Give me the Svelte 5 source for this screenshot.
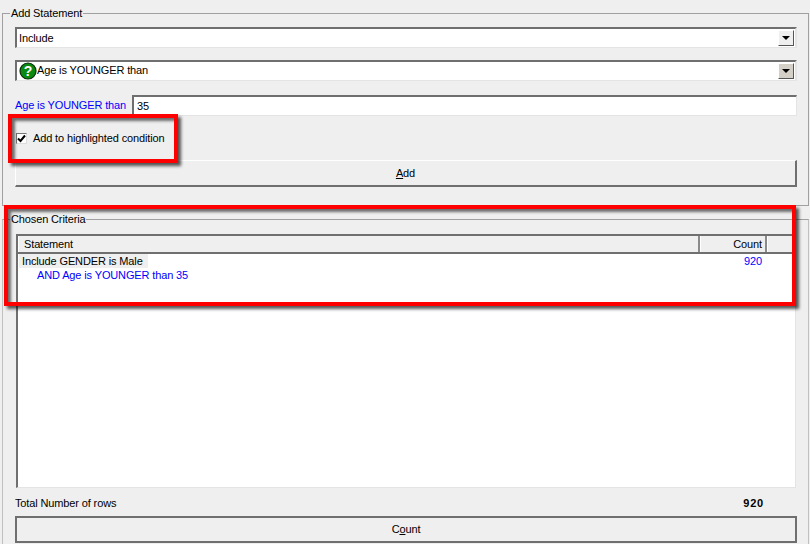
<script>
	const rows = [
		{ text: 'Include GENDER is Male', count: '920', sub: false },
		{ text: 'AND Age is YOUNGER than 35', count: '', sub: true }
	];
</script>

<div class="page">
	<fieldset class="group first">
		<legend>Add Statement</legend>

		<div class="combo">
			<span class="value">Include</span>
			<span class="arrow light"><i></i></span>
		</div>

		<div class="combo second">
			<svg class="help" width="18" height="18" viewBox="0 0 18 18">
				<circle cx="9" cy="9" r="8" fill="#0b8a12" stroke="#0a2e0a" stroke-width="1.2" />
				<text x="9" y="14" text-anchor="middle" fill="#fff" font-size="14" font-weight="700" font-family="Liberation Sans, sans-serif">?</text>
			</svg>
			<span class="value raised">Age is YOUNGER than</span>
			<span class="arrow"><i></i></span>
		</div>

		<div class="field">
			<label for="age">Age is YOUNGER than</label>
			<input id="age" value="35" />
		</div>

		<div class="check">
			<span class="box">
				<svg width="9" height="9" viewBox="0 0 9 9">
					<path d="M1 4.5 L3.5 7 L8 1.5" fill="none" stroke="#000" stroke-width="2" />
				</svg>
			</span>
			Add to highlighted condition
		</div>

		<button class="btn add"><u>A</u>dd</button>
	</fieldset>

	<fieldset class="group criteria">
		<legend>Chosen Criteria</legend>

		<div class="list">
			<div class="head">
				<div class="col statement">Statement</div>
				<div class="col count">Count</div>
				<div class="col rest"></div>
			</div>
			{#each rows as row}
				<div class="row">
					<span class="cell" class:sub={row.sub} class:picked={!row.sub}>{row.text}</span>
					<span class="num">{row.count}</span>
				</div>
			{/each}
		</div>

		<div class="total">
			<span>Total Number of rows</span>
			<b>920</b>
		</div>

		<button class="btn run">C<u>o</u>unt</button>
	</fieldset>

	<div class="mark mark-check"></div>
	<div class="mark mark-list"></div>
</div>

<style>
	:global(body) {
		margin: 0;
		background: #efefef;
	}
	.page {
		position: relative;
		width: 810px;
		height: 544px;
		overflow: hidden;
		background: #efefef;
		color: #000;
		font: 11px/13px Tahoma, 'Liberation Sans', sans-serif;
		letter-spacing: -0.13px;
		box-sizing: border-box;
		padding: 7px 0 0 2px;
	}
	.group {
		box-sizing: border-box;
		width: 807px;
		margin: 0;
		padding: 0 11px 0 12px;
		border: 1px solid #a0a0a0;
		min-inline-size: 0;
	}
	.group legend {
		padding: 0 1px;
		margin-left: -5px;
		line-height: 13px;
	}
	.first {
		height: 199px;
		padding-top: 7px;
	}
	.criteria {
		margin-top: 7px;
		height: 340px;
		padding-top: 8px;
		border-color: #c0c0c0;
		border-top-color: #a0a0a0;
		border-bottom: 0;
	}
	.combo {
		box-sizing: border-box;
		height: 21px;
		width: 782px;
		display: flex;
		align-items: center;
		background: #fff;
		border: 2px solid #6f6f6f;
		border-right-color: #e4e4e4;
		border-bottom: 1px solid #e4e4e4;
		padding-left: 2px;
	}
	.second {
		margin-top: 12px;
	}
	.value {
		flex: 1;
	}
	.raised {
		padding-bottom: 2px;
	}
	.help {
		flex: none;
	}
	.arrow {
		width: 16px;
		height: 16px;
		box-sizing: border-box;
		background: #d4d0c8;
		border: 1px solid #fff;
		border-right: 1px solid #555;
		border-bottom: 1px solid #555;
		display: flex;
		align-items: center;
		justify-content: center;
		margin-right: 1px;
	}
	.arrow.light {
		background: #efefef;
	}
	.arrow i {
		width: 0;
		height: 0;
		border: 4px solid transparent;
		border-top-color: #000;
		border-bottom: 0;
	}
	.field {
		display: flex;
		align-items: center;
		margin-top: 14px;
		height: 21px;
	}
	.field label {
		width: 117px;
		color: #0000ff;
		flex: none;
	}
	.field input {
		box-sizing: border-box;
		width: 665px;
		height: 21px;
		padding: 0 0 0 3px;
		font: inherit;
		letter-spacing: inherit;
		background: #fff;
		border: 2px solid #6f6f6f;
		border-right: 1px solid #e4e4e4;
		border-bottom: 1px solid #e4e4e4;
		outline: none;
	}
	.check {
		display: flex;
		align-items: center;
		gap: 6px;
		margin: 15px 0 0 1px;
		height: 14px;
	}
	.box {
		box-sizing: border-box;
		width: 11px;
		height: 11px;
		background: #fff;
		border: 1px solid #777;
		border-right-color: #ddd;
		border-bottom-color: #ddd;
		display: flex;
		align-items: center;
		justify-content: center;
	}
	.btn {
		display: block;
		box-sizing: border-box;
		width: 782px;
		height: 27px;
		padding: 0;
		font: inherit;
		letter-spacing: inherit;
		background: #efefef;
		color: #000;
		border: 1px solid #fff;
		border-right: 2px solid #6f6f6f;
		border-bottom: 2px solid #6f6f6f;
		border-radius: 0;
	}
	.add {
		margin-top: 15px;
	}
	.run {
		margin-top: 6px;
		border-top: 2px solid #6f6f6f;
		border-left: 2px solid #6f6f6f;
	}
	.list {
		box-sizing: border-box;
		width: 780px;
		height: 254px;
		margin-left: 1px;
		background: #fff;
		border: 2px solid #6f6f6f;
		border-right: 1px solid #e4e4e4;
		border-bottom: 1px solid #e4e4e4;
	}
	.head {
		display: flex;
		height: 16px;
		border-bottom: 2px solid #6f6f6f;
		background: #efefef;
	}
	.col {
		box-sizing: border-box;
		padding: 2px 3px 0 5px;
		border-left: 1px solid #fff;
		border-right: 2px solid #8a8a8a;
	}
	.statement {
		width: 682px;
	}
	.count {
		width: 67px;
		text-align: right;
	}
	.rest {
		flex: 1;
		border-right: 0;
	}
	.row {
		display: flex;
		justify-content: space-between;
		height: 14px;
		line-height: 14px;
	}
	.cell {
		padding: 0 3px;
		margin-left: 1px;
	}
	.picked {
		background: #efefef;
		padding-right: 5px;
	}
	.sub {
		color: #0000ff;
		margin-left: 16px;
	}
	.num {
		color: #0000ff;
		margin-right: 33px;
	}
	.total {
		display: flex;
		justify-content: space-between;
		margin-top: 9px;
		height: 13px;
		padding-right: 33px;
	}
	.total b {
		letter-spacing: 0.8px;
	}
	.mark {
		position: absolute;
		box-sizing: border-box;
		border: 4px solid #ff0000;
		box-shadow:
			3px 3px 3px rgba(0, 0, 0, 0.65),
			inset 3px 3px 3px rgba(0, 0, 0, 0.55);
	}
	.mark-check {
		left: 8px;
		top: 114px;
		width: 170px;
		height: 49px;
	}
	.mark-list {
		left: 4px;
		top: 205px;
		width: 792px;
		height: 101px;
	}
</style>
